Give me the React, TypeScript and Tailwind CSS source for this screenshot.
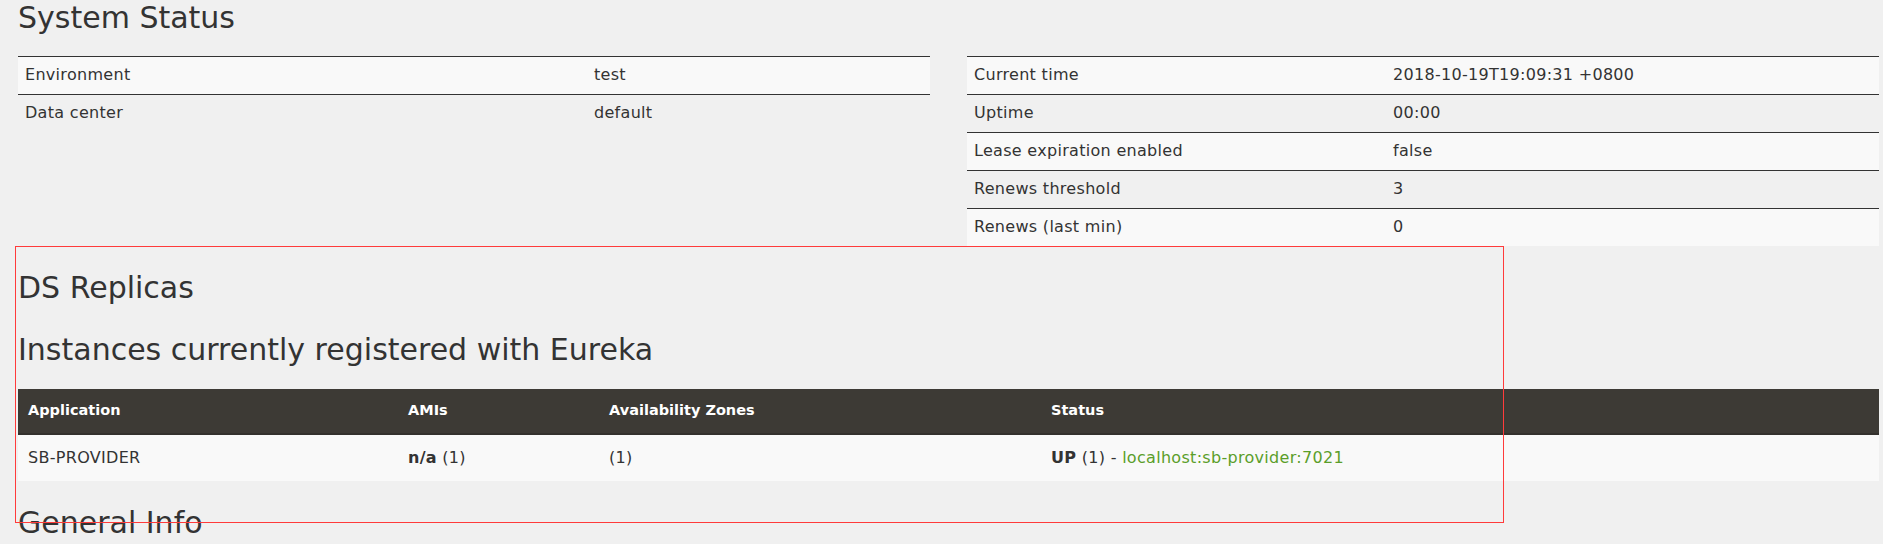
import React from "react";

const leftRows = [
  ["Environment", "test"],
  ["Data center", "default"],
];

const rightRows = [
  ["Current time", "2018-10-19T19:09:31 +0800"],
  ["Uptime", "00:00"],
  ["Lease expiration enabled", "false"],
  ["Renews threshold", "3"],
  ["Renews (last min)", "0"],
];

function KvTable({ rows, labelW }: { rows: string[][]; labelW: string }) {
  return (
    <div className="flex-1 flex flex-col">
      {rows.map(([k, v], i) => (
        <div
          key={k}
          className={`flex border-t border-[#333] ${i % 2 === 0 ? "bg-[#f9f9f9]" : ""}`}
        >
          <div className={`${labelW} shrink-0 pl-[7px] pt-[7px] pb-[9px] leading-[21px]`}>{k}</div>
          <div className="flex-1 pl-[7px] pt-[7px] pb-[9px] leading-[21px]">{v}</div>
        </div>
      ))}
    </div>
  );
}

export default function App() {
  return (
    <div className="relative min-h-[544px] bg-[#f0f0f0] pl-[18px] pr-[4px] text-[#333] font-['DejaVu_Sans',sans-serif] text-[16px] tracking-[0.3px]">
      <h1 className="text-[30px] leading-[36px] font-normal tracking-normal">System Status</h1>
      <div className="mt-[20px] flex items-start gap-[37px]">
        <KvTable rows={leftRows} labelW="w-[569px]" />
        <KvTable rows={rightRows} labelW="w-[419px]" />
      </div>
      <h1 className="mt-[24px] text-[30px] leading-[36px] font-normal tracking-normal">DS Replicas</h1>
      <h1 className="mt-[26px] text-[30px] leading-[36px] font-normal tracking-normal">
        Instances currently registered with Eureka
      </h1>
      <div className="mt-[21px] flex flex-col">
        <div className="flex h-[46px] items-center bg-[#3d3a35] border-b-2 border-[#34312d] text-white font-bold text-[14.5px] tracking-normal">
          <div className="w-[380px] shrink-0 pl-[10px]">Application</div>
          <div className="w-[201px] shrink-0 pl-[10px]">AMIs</div>
          <div className="w-[442px] shrink-0 pl-[10px]">Availability Zones</div>
          <div className="flex-1 pl-[10px]">Status</div>
        </div>
        <div className="flex h-[46px] items-center bg-[#f9f9f9]">
          <div className="w-[380px] shrink-0 pl-[10px]">SB-PROVIDER</div>
          <div className="w-[201px] shrink-0 pl-[10px]">
            <b className="font-bold">n/a</b> (1)
          </div>
          <div className="w-[442px] shrink-0 pl-[10px]">(1)</div>
          <div className="flex-1 pl-[10px]">
            <b className="font-bold">UP</b> (1) - <span className="text-[#5b9e2a]">localhost:sb-provider:7021</span>
          </div>
        </div>
      </div>
      <h1 className="mt-[24px] text-[30px] leading-[36px] font-normal tracking-normal">General Info</h1>
      <div className="absolute left-[15px] top-[246px] w-[1489px] h-[277px] border border-[#ff3b3b] pointer-events-none" />
    </div>
  );
}
